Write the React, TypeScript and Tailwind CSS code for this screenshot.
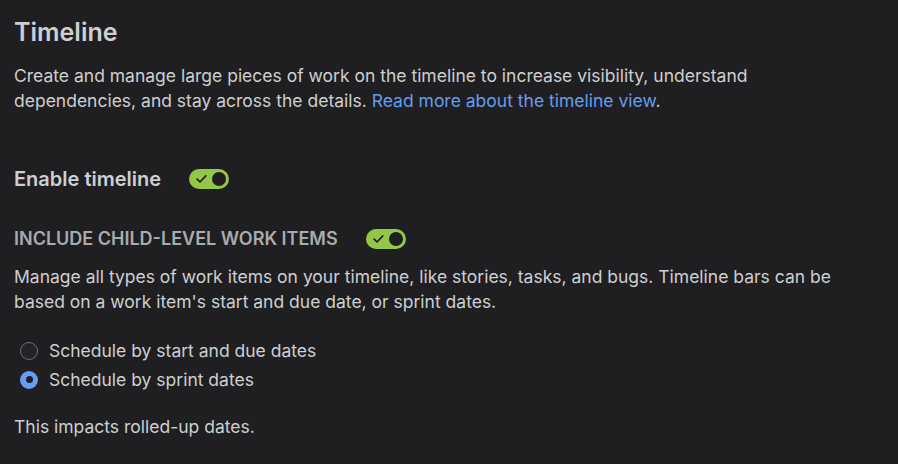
import { useState } from "react";

function Toggle({ checked, onChange }: { checked: boolean; onChange: () => void }) {
  return (
    <button
      type="button"
      onClick={onChange}
      className={`relative flex h-[20px] w-[40px] shrink-0 items-center rounded-full ${
        checked ? "bg-[#94c748]" : "bg-[#4b4d51]"
      }`}
    >
      {checked ? (
        <svg className="absolute left-[7px] top-[5px]" width="11" height="10" viewBox="0 0 11 10" fill="none">
          <path d="M1.2 5.2 4 8 9.8 1.8" stroke="#1f1f21" strokeWidth="1.7" strokeLinecap="round" strokeLinejoin="round" />
        </svg>
      ) : null}
      <span
        className={`absolute top-[3px] h-[14px] w-[14px] rounded-full bg-[#1f1f21] ${
          checked ? "left-[23px]" : "left-[3px]"
        }`}
      />
    </button>
  );
}

function Radio({ checked, label, onSelect }: { checked: boolean; label: string; onSelect: () => void }) {
  return (
    <label className="flex h-[29px] cursor-pointer items-center gap-[11px] pl-[6px]" onClick={onSelect}>
      {checked ? (
        <span className="flex h-[18px] w-[18px] items-center justify-center rounded-full bg-[#669df1]">
          <span className="h-[7px] w-[7px] rounded-full bg-[#1f1f21]" />
        </span>
      ) : (
        <span className="h-[18px] w-[18px] rounded-full border border-[#6b6e76] bg-[#232427]" />
      )}
      <span>{label}</span>
    </label>
  );
}

export default function App() {
  const [enabled, setEnabled] = useState(true);
  const [childItems, setChildItems] = useState(true);
  const [schedule, setSchedule] = useState("sprint");

  return (
    <main
      className="min-h-[464px] bg-[#1f1f21] px-[14px] pt-[17px] text-[17.5px] leading-[25px] text-[#cecfd2]"
      style={{ fontFamily: "Inter, 'Noto Sans', sans-serif" }}
    >
      <div className="w-[838px]">
        <h1 className="text-[25px] font-semibold leading-[30px] text-[#cecfd2]">Timeline</h1>
        <p className="mt-[16px]">
          Create and manage large pieces of work on the timeline to increase visibility, understand
          dependencies, and stay across the details.{" "}
          <a href="#" className="text-[#669df1]">
            Read more about the timeline view
          </a>
          .
        </p>

        <div className="mt-[54px] flex h-[24px] items-center gap-[28px]">
          <h2 className="text-[20px] font-semibold leading-[24px]">Enable timeline</h2>
          <Toggle checked={enabled} onChange={() => setEnabled(!enabled)} />
        </div>

        <div className="mt-[36px] flex h-[24px] items-center gap-[28px]">
          <h3 className="text-[18px] font-semibold uppercase leading-[24px] text-[#a9abaf]">
            Include child-level work items
          </h3>
          <Toggle checked={childItems} onChange={() => setChildItems(!childItems)} />
        </div>

        <p className="mt-[13px]">
          Manage all types of work items on your timeline, like stories, tasks, and bugs. Timeline bars can be
          based on a work item's start and due date, or sprint dates.
        </p>

        <div className="mt-[22px] flex flex-col">
          <Radio
            checked={schedule === "dates"}
            label="Schedule by start and due dates"
            onSelect={() => setSchedule("dates")}
          />
          <Radio
            checked={schedule === "sprint"}
            label="Schedule by sprint dates"
            onSelect={() => setSchedule("sprint")}
          />
        </div>

        <p className="mt-[20px]">This impacts rolled-up dates.</p>
      </div>
    </main>
  );
}
